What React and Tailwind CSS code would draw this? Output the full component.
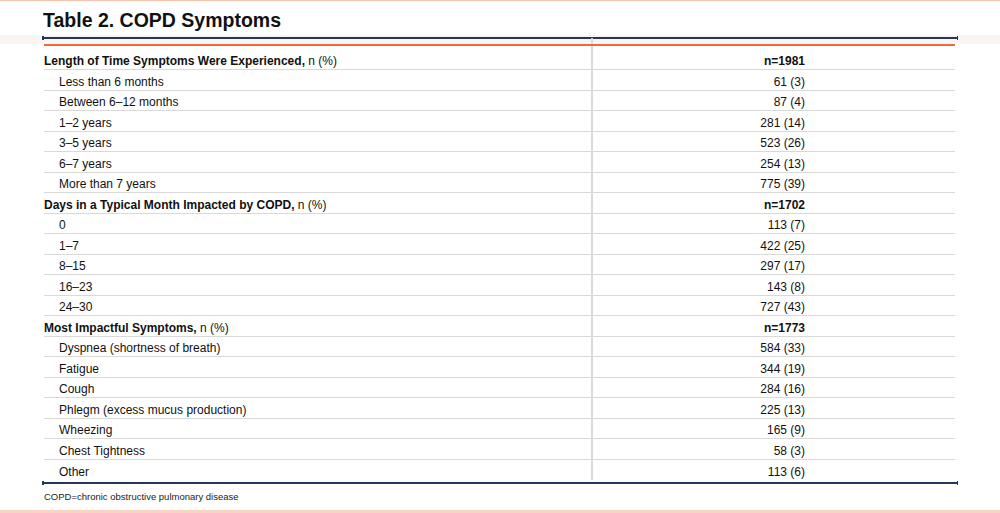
const sections = [
  {
    title: "Length of Time Symptoms Were Experienced",
    n: "n=1981",
    items: [
      ["Less than 6 months", "61 (3)"],
      ["Between 6\u201312 months", "87 (4)"],
      ["1\u20132 years", "281 (14)"],
      ["3\u20135 years", "523 (26)"],
      ["6\u20137 years", "254 (13)"],
      ["More than 7 years", "775 (39)"],
    ],
  },
  {
    title: "Days in a Typical Month Impacted by COPD",
    n: "n=1702",
    items: [
      ["0", "113 (7)"],
      ["1\u20137", "422 (25)"],
      ["8\u201315", "297 (17)"],
      ["16\u201323", "143 (8)"],
      ["24\u201330", "727 (43)"],
    ],
  },
  {
    title: "Most Impactful Symptoms",
    n: "n=1773",
    items: [
      ["Dyspnea (shortness of breath)", "584 (33)"],
      ["Fatigue", "344 (19)"],
      ["Cough", "284 (16)"],
      ["Phlegm (excess mucus production)", "225 (13)"],
      ["Wheezing", "165 (9)"],
      ["Chest Tightness", "58 (3)"],
      ["Other", "113 (6)"],
    ],
  },
];

function Rule() {
  return (
    <div className="ml-[42px] w-[916px] h-[4px] flex items-center">
      <div className="w-[1.5px] h-full bg-[#22375a]" />
      <div className="flex-1 h-[2px] bg-[#22375a]" />
      <div className="w-[1.5px] h-full bg-[#22375a]" />
    </div>
  );
}

export default function App() {
  const rows = [];
  sections.forEach((s, si) => {
    rows.push({ key: `h${si}`, header: true, label: s.title, value: s.n });
    s.items.forEach((it, ii) =>
      rows.push({ key: `r${si}-${ii}`, header: false, label: it[0], value: it[1] })
    );
  });

  return (
    <div className="w-[1000px] h-[513px] bg-white flex flex-col font-['Liberation_Sans',Arial,sans-serif] text-[#111]">
      <div className="h-px bg-[#f8c4ae]" />
      <div className="pl-[43px] pt-[8px] h-[34px] text-[19.5px] leading-[22px] font-bold text-[#111]">
        Table 2. COPD Symptoms
      </div>
      <div className="relative">
        <div className="absolute left-[591px] top-[3px] bottom-0 w-[2px] bg-[#dadada]" />
        <div className="h-[9px] bg-[#faf5f2] pt-[1px]">
          <Rule />
        </div>
        <div className="relative z-10 ml-[44px] w-[911px] h-[2px] bg-[#ef6a37]" />
        <div className="pt-[3.5px] ml-[44px] w-[911px] flex flex-col">
          {rows.map((r, i) => (
            <div
              key={r.key}
              className={`h-[20.5px] flex items-end pb-[1px] text-[12px] leading-[14px] ${
                i < rows.length - 1 ? "border-b border-[#d9d9d9]" : ""
              }`}
            >
              <div className="w-[547px] flex">
                {r.header ? (
                  <span>
                    <span className="font-bold">{r.label},</span> n (%)
                  </span>
                ) : (
                  <span className="pl-[15px]">{r.label}</span>
                )}
              </div>
              <div className={`flex-1 text-right pr-[150px] ${r.header ? "font-bold" : ""}`}>
                {r.value}
              </div>
            </div>
          ))}
        </div>
      </div>
      <div className="pt-px">
        <Rule />
      </div>
      <div className="pl-[44px] mt-[6px] text-[9.5px] leading-[11px] text-[#222]">
        COPD=chronic obstructive pulmonary disease
      </div>
      <div className="flex-1" />
      <div className="h-[3px] bg-[#fbd3c3]" />
    </div>
  );
}
